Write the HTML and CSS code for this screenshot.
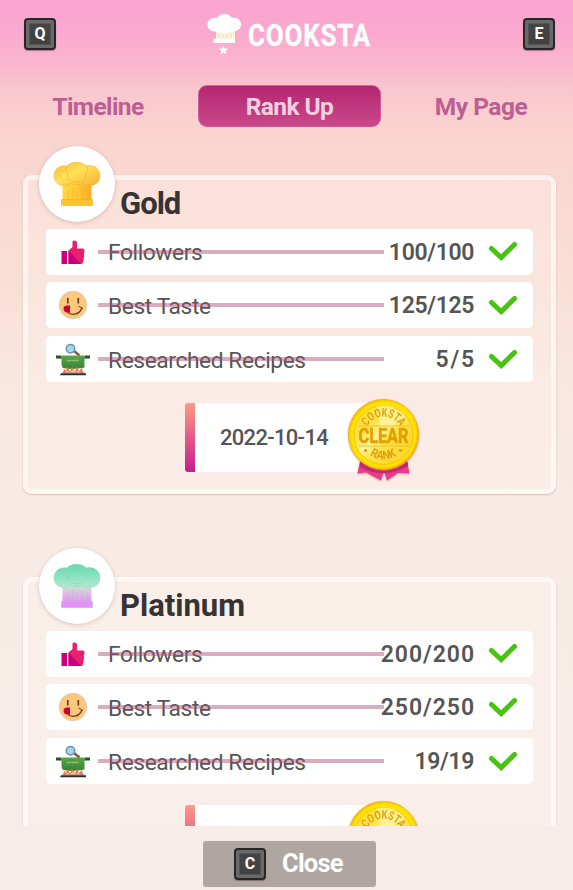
FILE: index.html
```html
<!DOCTYPE html>
<html lang="en">
<head>
<meta charset="utf-8">
<title>Cooksta</title>
<link rel="stylesheet" href="styles.css">
</head>
<body>
<svg class="defs" aria-hidden="true">
  <defs>
    <linearGradient id="goldHat" x1="0" y1="0" x2="1" y2="1"><stop offset="0" stop-color="#ffb83a"/><stop offset=".45" stop-color="#ffe256"/><stop offset="1" stop-color="#fcae35"/></linearGradient>
    <linearGradient id="goldBand" x1="0" y1="0" x2="1" y2="0"><stop offset="0" stop-color="#ffd83e"/><stop offset=".5" stop-color="#ffca35"/><stop offset="1" stop-color="#fdaa25"/></linearGradient>
    <linearGradient id="platHat" x1="0" y1="0" x2="0" y2="1"><stop offset="0" stop-color="#68d8b0"/><stop offset=".55" stop-color="#8be3c3"/><stop offset="1" stop-color="#b4e8ce"/></linearGradient>
    <linearGradient id="platBand" x1="0" y1="0" x2="0" y2="1"><stop offset="0" stop-color="#bdecc9"/><stop offset=".35" stop-color="#dfc4e4"/><stop offset="1" stop-color="#e48cf6"/></linearGradient>
    <linearGradient id="coin" x1="0" y1="0" x2="1" y2="1"><stop offset="0" stop-color="#ffd91c"/><stop offset=".3" stop-color="#ffe34a"/><stop offset=".46" stop-color="#fff3a0"/><stop offset=".55" stop-color="#ffe552"/><stop offset=".8" stop-color="#fed72c"/><stop offset="1" stop-color="#ffe968"/></linearGradient>
    <linearGradient id="rim" x1="0" y1="0" x2="1" y2="1"><stop offset="0" stop-color="#f5b800"/><stop offset=".5" stop-color="#ffe100"/><stop offset="1" stop-color="#f3aa0a"/></linearGradient>
    <linearGradient id="pot" x1="0" y1="0" x2="0" y2="1"><stop offset="0" stop-color="#5aa548"/><stop offset="1" stop-color="#3a8238"/></linearGradient>
    <path id="upperArc" d="M20.200 28.300A18.500 18.500 0 0 1 52.800 28.300"/>
    <path id="lowerArc" d="M23 57A24 24 0 0 0 50.500 57"/>
  </defs>
  <symbol id="hat" viewBox="0 0 48 46">
    <path d="M9.500 22h29v19h-29z" fill="var(--band)"/>
    <path d="M11 24C5 25 1 20 1 14.500C1 8 7 3.500 14 5C17 .5 29-.5 33 5C41 3 47 8 47 14.500C47 20 43 25 37 24C33 25 31 23 30 22C27 24 20 24 17 22C15 24 13 25 11 24Z" fill="var(--puff)" stroke="var(--line)" stroke-width=".5"/>
    <path d="M14 5.500C12 8 14 13 16 14M33 5C36 7 34 12 32 14M14 14.500C16 23 31 23 33 14.500" fill="none" stroke="var(--line)" stroke-width=".6"/>
    <path d="M15 29v10M20 27v12M24 29v10M29 27v12M34 29v10" stroke="var(--line)" stroke-width=".6"/>
    <path d="M8.500 38.500h31v6h-31z" fill="var(--base)" stroke="var(--line)" stroke-width=".6"/>
  </symbol>
  <symbol id="thumb" viewBox="0 0 24 25">
    <path d="M.5 11h5.500v13H.5z" fill="#c9007c"/>
    <path d="M7.500 10.500L11.500 7V1.500Q12 .500 13.500.500Q16 .500 16 3V8.500H22Q23.500 8.500 23.500 10.500Q23.500 12.500 22.500 13Q23.800 14.500 22.500 16.500Q23.500 18.500 22 20Q22.500 24 20 24H7.500Z" fill="#e8216f"/>
    <path d="M7.500 10.500L20 24H7.500Z" fill="#c9007c"/>
    <path d="M20.500 12.800h3M20.500 16.500h3M20 20.200h3" stroke="#c9005f" stroke-width=".5"/>
  </symbol>
  <symbol id="face" viewBox="0 0 30 30">
    <circle cx="15" cy="15" r="13.800" fill="#fdc77c" stroke="#d9c8ba" stroke-width=".8"/>
    <path d="M9.800 8v5.500M20.300 8v5.500" stroke="#6b4022" stroke-width="1.700"/>
    <path d="M8 20C12 26.500 21.500 25.500 24 17.500" fill="none" stroke="#6b4022" stroke-width="1.300"/>
    <path d="M20.500 16l4.500 2.500" stroke="#6b4022"/>
    <path d="M5.500 18Q6 15.800 8.500 15.500H12V22.500H9Q5.500 22 5.500 18Z" fill="#cc0035"/>
  </symbol>
  <symbol id="stew" viewBox="0 0 36 33">
    <path d="M19 8l5.500 4.500" stroke="#8b5a3e" stroke-width="2.500"/>
    <circle cx="15.500" cy="5.800" r="4.200" fill="#a2d7ec" stroke="#6793aa" stroke-width="1.500"/>
    <path d="M1 14h5M30 14h5" stroke="#22542f" stroke-width="3"/>
    <path d="M5.500 14.500h25" stroke="#2d6b30" stroke-width="2"/>
    <path d="M6.500 12.500h23v12Q18 27 8.500 25Q6.500 24 6.500 21Z" fill="url(#pot)"/>
    <path d="M12 17.500h12" stroke="#a4cb83" stroke-width="1.500" stroke-dasharray="1.200 .5"/>
    <path d="M8 30l1-4.500 2 2.500 1-4 3 4 2-4 3 4 2-4 2 4 3-3.500 1 5.500Z" fill="#ff7445"/>
    <path d="M10 30l2-2 3 1 3-2 3 2 3-1 2 2Z" fill="#ffe0a0"/>
    <path d="M7.500 29.800h22" stroke="#8e8785"/>
    <path d="M6 30.300h25v2H5Z" fill="#352c2f"/>
  </symbol>
  <symbol id="check" viewBox="0 0 30 22">
    <path d="M3.500 7.500L13.200 16.500L26.500 3.500" fill="none" stroke="#46c40e" stroke-width="5" stroke-linecap="round" stroke-linejoin="miter"/>
  </symbol>
  <symbol id="medal" viewBox="0 0 74 86">
    <path d="M14 58L10.500 75.500L19 74.500L34 82.500L37 73L40 82.500L51 75L62.500 75.500L59 58Z" fill="#e93a8b"/>
    <path d="M13 64Q37 82 61 64L61 68Q37 82 13 69Z" fill="#bf2b68"/>
    <circle cx="36.500" cy="36.500" r="35.200" fill="url(#rim)" stroke="#ef9d1c" stroke-width=".6"/>
    <circle cx="36.500" cy="36.500" r="33" fill="#ffe400"/>
    <circle cx="36.500" cy="37" r="29.500" fill="url(#coin)" stroke="#eeb414" stroke-width=".7"/>
    <path d="M36.500 37L29 8.500Q38 6.500 47 9Z" fill="#fff6a8" opacity=".6"/>
    <path d="M11 28h52M11 48h52" stroke="#e7b91e" stroke-width=".8"/>
    <circle cx="18.500" cy="52.500" r="1.600" fill="#d99d12"/><circle cx="53.500" cy="52.500" r="1.600" fill="#d99d12"/>
  </symbol>
</svg>

<div class="screen">
  <header class="header">
    <span class="key">Q</span>
    <svg class="logo" viewBox="0 0 166 44" role="img">
      <path d="M9 18h19v12H9z" fill="#fbf3df"/>
      <path d="M12 28v-8M16 28v-7M20 28v-7M24 28v-8" stroke="#f1e3b6" stroke-width="1.300"/>
      <path d="M8 18.500C3 18.500.5 15 .5 11.500C.5 7 5 3.500 10 5C13-.3 22-.3 25 5C30 3.500 34 7 34 11.500C34 15 31 18.500 27 18C22 20 12 20 8 18.500Z" fill="#fff"/>
      <rect x="6.500" y="25.500" width="21.500" height="4.500" rx="1.500" fill="#fff"/>
      <path d="M16.500 32.500l1.400 3 3.300.3-2.500 2.200.8 3.200-3-1.700-3 1.700.8-3.200-2.500-2.200 3.300-.3z" fill="#fff"/>
      <text x="41" y="32.500" class="logo-text" textLength="123" lengthAdjust="spacingAndGlyphs">COOKSTA</text>
    </svg>
    <span class="key">E</span>
  </header>

  <nav class="tabs">
    <span class="tab tab-left">Timeline</span>
    <span class="tab tab-active">Rank Up</span>
    <span class="tab tab-right">My Page</span>
  </nav>

  <main class="list">
    <section class="card">
      <span class="badge gold"><svg><use href="#hat"/></svg></span>
      <h2 class="title title-gold">Gold</h2>
      <ul class="goals">
        <li class="goal"><svg class="icon thumb"><use href="#thumb"/></svg><span class="name">Followers</span><span class="count">100/100</span><svg class="check"><use href="#check"/></svg></li>
        <li class="goal"><svg class="icon face"><use href="#face"/></svg><span class="name">Best Taste</span><span class="count">125/125</span><svg class="check"><use href="#check"/></svg></li>
        <li class="goal"><svg class="icon stew"><use href="#stew"/></svg><span class="name">Researched Recipes</span><span class="count count-short">5/5</span><svg class="check"><use href="#check"/></svg></li>
      </ul>
      <div class="ticket">
        <span class="date">2022-10-14</span>
        <svg class="medal" viewBox="0 0 74 86">
          <use href="#medal" width="74" height="86"/>
          <text class="medal-arc"><textPath href="#upperArc" textLength="40" lengthAdjust="spacingAndGlyphs">COOKSTA</textPath></text>
          <text class="medal-clear" x="11.500" y="44.500" textLength="50" lengthAdjust="spacingAndGlyphs">CLEAR</text>
          <text class="medal-arc"><textPath href="#lowerArc" textLength="28" lengthAdjust="spacingAndGlyphs">RANK</textPath></text>
        </svg>
      </div>
    </section>

    <section class="card">
      <span class="badge platinum"><svg><use href="#hat"/></svg></span>
      <h2 class="title">Platinum</h2>
      <ul class="goals">
        <li class="goal"><svg class="icon thumb"><use href="#thumb"/></svg><span class="name">Followers</span><span class="count count-wide">200/200</span><svg class="check"><use href="#check"/></svg></li>
        <li class="goal"><svg class="icon face"><use href="#face"/></svg><span class="name">Best Taste</span><span class="count count-wide">250/250</span><svg class="check"><use href="#check"/></svg></li>
        <li class="goal"><svg class="icon stew"><use href="#stew"/></svg><span class="name">Researched Recipes</span><span class="count">19/19</span><svg class="check"><use href="#check"/></svg></li>
      </ul>
      <div class="ticket">
        <svg class="medal" viewBox="0 0 74 86">
          <use href="#medal" width="74" height="86"/>
          <text class="medal-arc"><textPath href="#upperArc" textLength="40" lengthAdjust="spacingAndGlyphs">COOKSTA</textPath></text>
        </svg>
      </div>
    </section>
  </main>

  <footer class="footer">
    <button class="close"><span class="key">C</span><span class="close-label">Close</span></button>
  </footer>
</div>
</body>
</html>
```

FILE: styles.css
```css
* { box-sizing: border-box; }
body { margin: 0; font-family: Roboto, sans-serif; }
.defs { position: absolute; width: 0; height: 0; }
.screen {
  width: 573px; height: 890px; overflow: hidden;
  display: flex; flex-direction: column;
  background: linear-gradient(180deg, #faa5d1 0, #faa9cf 35px, #fab7ce 65px, #f9c6cf 90px, #f9d1ce 120px, #f9d6d0 150px, #f9d9d2 190px, #f9e0d7 290px, #f8e8e1 400px, #f8ebe6 540px, #f7ece8 890px);
}
.header {
  flex: none; height: 85px; padding: 13px 18px 0 24px;
  display: flex; justify-content: space-between; align-items: flex-start;
}
.key {
  width: 32px; height: 32px; margin-top: 5px; flex: none;
  display: grid; place-items: center;
  border: 2px solid #262626; border-radius: 4px;
  background: linear-gradient(#454545, #404040) padding-box;
  box-shadow: inset 0 0 0 3px #696969, inset 0 0 0 4px #555, 0 1px 1px rgba(70, 30, 40, .4);
  color: #fff; font: 700 16px/1 Roboto, sans-serif;
}
.logo { width: 166px; height: 44px; margin-left: 1px; }
.logo-text { font: 700 30.500px Roboto, sans-serif; fill: #fff; stroke: #fff; stroke-width: .3px; letter-spacing: 1px; }

.tabs { flex: none; height: 42px; padding: 0 17px; display: grid; grid-template-columns: 181px 183px 1fr; }
.tab {
  display: flex; align-items: center; justify-content: center;
  color: #bc5e93; font-size: 24.5px; font-weight: 700; letter-spacing: -.6px;
}
.tab-left { padding-right: 19px; }
.tab-right { padding-left: 25px; letter-spacing: -.5px; }
.tab-active {
  color: #f4cfe0; border-radius: 9px; border: 1px solid rgba(220, 120, 165, .6);
  background: linear-gradient(#b52670, #c8488a);
}

.list { flex: none; height: 698.5px; padding: 48px 17px 0 23px; overflow: hidden; display: flex; flex-direction: column; gap: 83px; }
.card {
  position: relative; flex: none; height: 319px; padding: 0 18px;
  border: 5px solid rgba(255, 252, 250, .72); border-radius: 9px;
  background: rgba(255, 249, 238, .26) padding-box;
  box-shadow: 0 1px 2px rgba(130, 80, 70, .28);
}
.badge {
  position: absolute; left: 11px; top: -34px; width: 76px; height: 76px;
  display: grid; place-items: center; border-radius: 50%; background: #fff;
  box-shadow: 0 1px 4px rgba(120, 70, 60, .25);
}
.badge svg { width: 48px; height: 46px; }
.gold { --puff: url(#goldHat); --band: url(#goldBand); --base: #ffc52f; --line: #f3a82e; }
.platinum { --puff: url(#platHat); --band: url(#platBand); --base: #e591f7; --line: #98cda9; }
.title { margin: 0 0 0 74px; height: 48.500px; padding-top: 6px; font-size: 31px; line-height: 36px; font-weight: 700; color: #353333; }
.title-gold { letter-spacing: -1px; }
.goals { margin: 0; padding: 0; list-style: none; display: flex; flex-direction: column; gap: 7.800px; }
.goal {
  position: relative; height: 46px; width: 487px; padding: 0 15px 0 8px;
  display: flex; align-items: center; border-radius: 5px; background: #fff; color: #555;
}
.goal::after {
  content: ""; position: absolute; left: 52px; top: 21px; width: 286px; height: 4px;
  background: rgba(171, 76, 116, .46);
}
.icon { flex: none; }
.thumb { width: 24px; height: 25px; margin: 1px 7px 0; }
.face { width: 30px; height: 30px; margin: 0 4px; }
.stew { width: 36px; height: 33px; margin: 0 1px; }
.name { margin: 3px 0 0 16px; font-size: 22.800px; line-height: 28px; letter-spacing: -.42px; }
.count { margin-left: auto; font-size: 23px; font-weight: 600; letter-spacing: -.35px; padding-top: 1px; }
.count-wide { letter-spacing: .95px; margin-right: -1px; }
.count-short { letter-spacing: 1.800px; margin-right: -2px; }
.check { width: 30px; height: 22px; margin: 1px 0 0 14px; flex: none; }
.ticket {
  position: relative; width: 205px; height: 69px; margin: 21px 0 0 139px; padding-left: 35px;
  display: flex; align-items: center; border-radius: 3px;
  background: linear-gradient(#ff9a84, #c61c8c) left / 10px 100% no-repeat, #fff;
}
.date { font-size: 22px; font-weight: 500; letter-spacing: -.7px; color: #555; }
.medal { position: absolute; left: 162px; top: -5px; width: 74px; height: 86px; filter: drop-shadow(0 1px 1px rgba(120, 60, 20, .35)); }
.medal-arc { font: 700 12px Roboto, sans-serif; fill: #dda214; }
.medal-clear { font: 700 19.500px Roboto, sans-serif; fill: #e3a100; stroke: #e3a100; stroke-width: .6px; }

.footer { flex: 1; display: flex; justify-content: center; align-items: flex-start; padding: 15.500px 0 0 6px; background: #f7ece8; }
.close {
  width: 173px; height: 46px; padding: 0 0 0 31px; border: 0; border-radius: 3px;
  display: flex; align-items: center; gap: 16px; background: #b0a6a1;
}
.close .key { margin: 0; }
.close-label { font: 700 25.500px/1 Roboto, sans-serif; letter-spacing: -.8px; color: #fff; }
```
